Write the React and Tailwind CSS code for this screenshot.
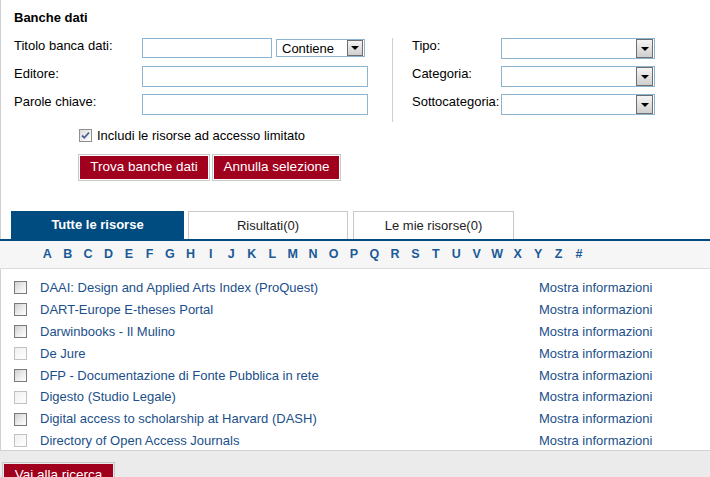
import React from "react";

const FONT = { fontFamily: '"Liberation Sans", Arial, sans-serif' };

function Arrow({ big }) {
  return (
    <span className={`flex ${big ? "h-[19px] w-[17px]" : "h-[16px] w-[16px]"} items-center justify-center border border-[#6e6e6e] bg-gradient-to-b from-[#f4f4f4] to-[#cfcfcf]`}>
      <svg width="8" height="4" viewBox="0 0 8 4"><path d="M0 0h8L4 4z" fill="#000" /></svg>
    </span>
  );
}

function Select({ w, h, big, children }) {
  return (
    <div className={`flex ${w} ${h} items-center justify-between border border-[#8db4cf] bg-white pl-[5px] pr-[1px]`}>
      <span className="text-[13px] leading-none text-black">{children}</span>
      <Arrow big={big} />
    </div>
  );
}

function Check({ enabled, checked }) {
  if (checked) {
    return (
      <span className="flex h-[13px] w-[13px] items-center justify-center border border-[#8e8f8f] bg-gradient-to-br from-[#dcdcdc] to-[#ffffff]">
        <svg width="9" height="9" viewBox="0 0 9 9"><path d="M1 4.5l2.3 2.3L8 1.5" stroke="#4a5f97" strokeWidth="1.8" fill="none" /></svg>
      </span>
    );
  }
  return enabled ? (
    <span className="block h-[13px] w-[13px] border border-[#7a7a7a] bg-gradient-to-br from-[#cfcfcf] via-[#ebebeb] to-[#ffffff]" />
  ) : (
    <span className="block h-[13px] w-[13px] border border-[#c2c2c2] bg-gradient-to-br from-[#f0f0f0] to-[#ffffff]" />
  );
}

const letters = "ABCDEFGHIJKLMNOPQRSTUVWXYZ#".split("");

const items = [
  ["DAAI: Design and Applied Arts Index (ProQuest)", true],
  ["DART-Europe E-theses Portal", true],
  ["Darwinbooks - Il Mulino", true],
  ["De Jure", false],
  ["DFP - Documentazione di Fonte Pubblica in rete", true],
  ["Digesto (Studio Legale)", false],
  ["Digital access to scholarship at Harvard (DASH)", true],
  ["Directory of Open Access Journals", false],
];

export default function App() {
  return (
    <div style={FONT} className="flex h-[477px] w-[710px] flex-col overflow-hidden bg-white text-[13px] text-black">
      {/* top section */}
      <div className="flex h-[239px] shrink-0 flex-col border-l border-[#cfcfcf] pl-[13px]">
        <div className="mt-[9px] h-[18px] text-[13px] font-bold leading-[18px]">Banche dati</div>
        <div className="mt-[11px] flex">
          <div className="flex w-[378px] flex-col gap-[7px]">
            <div className="flex h-[21px] items-start">
              <span className="w-[128px] leading-[15px]">Titolo banca dati:</span>
              <div className="h-[20px] w-[130px] border border-[#8db4cf]" />
              <div className="ml-[4px] mt-[1px]">
                <Select w="w-[89px]" h="h-[18px]">Contiene</Select>
              </div>
            </div>
            <div className="flex h-[21px] items-start">
              <span className="w-[128px] leading-[15px]">Editore:</span>
              <div className="h-[21px] w-[226px] border border-[#8db4cf]" />
            </div>
            <div className="flex h-[21px] items-start">
              <span className="w-[128px] leading-[15px]">Parole chiave:</span>
              <div className="h-[21px] w-[226px] border border-[#8db4cf]" />
            </div>
          </div>
          <div className="h-[84px] border-l border-[#cfcfcf]" />
          <div className="flex flex-col gap-[7px] pl-[19px]">
            {["Tipo:", "Categoria:", "Sottocategoria:"].map((l) => (
              <div key={l} className="flex h-[21px] items-start">
                <span className="w-[89px] whitespace-nowrap leading-[15px]">{l}</span>
                <Select w="w-[154px]" h="h-[21px]" big></Select>
              </div>
            ))}
          </div>
        </div>
        <div className="mt-[6px] flex items-center pl-[65px]">
          <Check checked />
          <span className="ml-[5px] leading-[15px]">Includi le risorse ad accesso limitato</span>
        </div>
        <div className="mt-[11px] flex gap-[2px] pl-[64px]">
          {["Trova banche dati", "Annulla selezione"].map((t, i) => (
            <div key={t} className="border border-[#c8c8c8] p-[1px]">
              <div className={`flex h-[23px] items-center justify-center bg-[#a0001e] text-[13.5px] text-white ${i === 0 ? "w-[128px]" : "w-[125px]"}`}>
                {t}
              </div>
            </div>
          ))}
        </div>
        <div className="mt-auto flex items-end gap-[4px]">
          <div className="-ml-[3px] flex h-[28px] w-[173px] items-center justify-center bg-[#004b7f] text-[13px] font-bold text-white">
            Tutte le risorse
          </div>
          <div className="flex h-[28px] w-[160px] items-center justify-center border border-b-0 border-[#c8c8c8] text-[#222]">
            Risultati(0)
          </div>
          <div className="ml-[1px] flex h-[28px] w-[161px] items-center justify-center border border-b-0 border-[#c8c8c8] text-[#222]">
            Le mie risorse(0)
          </div>
        </div>
      </div>
      <div className="h-[2px] shrink-0 bg-[#004b7f]" />
      {/* alphabet */}
      <div className="flex h-[28px] shrink-0 items-center border-b border-[#dcdcdc] bg-[#f6f6f6] pl-[37px]">
        {letters.map((l) => (
          <span key={l} className="flex w-[20.46px] justify-center text-[12.5px] font-bold text-[#1a5a98]">
            {l}
          </span>
        ))}
      </div>
      {/* list */}
      <div className="flex h-[182px] shrink-0 flex-col border-b border-l border-[#d2d2d2] pt-[8px]">
        {items.map(([t, en]) => (
          <div key={t} className="flex h-[21.86px] shrink-0 items-center">
            <div className="w-[39px] pl-[13px]">
              <Check enabled={en} />
            </div>
            <span className="w-[499px] text-[#1b4f8a]">{t}</span>
            <span className="text-[#1b4f8a]">Mostra informazioni</span>
          </div>
        ))}
      </div>
      {/* footer */}
      <div className="flex-1 bg-[#ebebeb] pl-[2px] pt-[11px]">
        <div className="inline-block border border-[#c8c8c8] p-[1px]">
          <div className="flex h-[23px] w-[109px] items-center justify-center bg-[#a0001e] text-[13.5px] text-white">
            Vai alla ricerca
          </div>
        </div>
      </div>
    </div>
  );
}
